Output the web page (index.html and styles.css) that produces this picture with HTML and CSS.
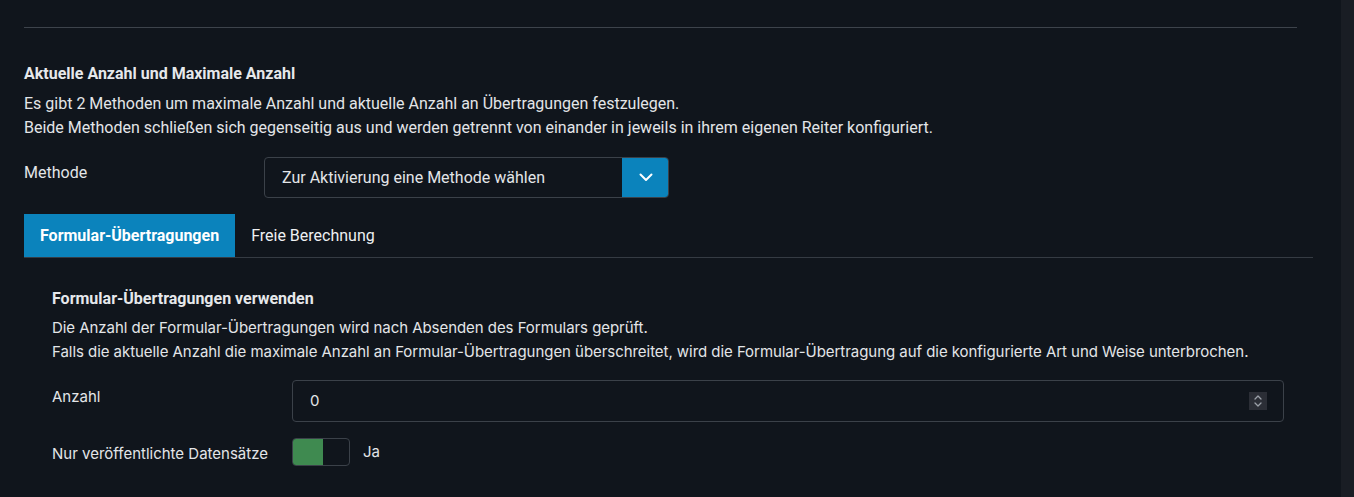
FILE: index.html
```html
<!DOCTYPE html>
<html lang="de">
<head>
<meta charset="utf-8">
<title>Anzahl</title>
<link rel="stylesheet" href="styles.css">
</head>
<body>
<div class="page">
  <main class="main">
    <hr class="sep">
    <section class="block">
      <h3 class="heading">Aktuelle Anzahl und Maximale Anzahl</h3>
      <p class="desc">Es gibt 2 Methoden um maximale Anzahl und aktuelle Anzahl an Übertragungen festzulegen.<br>Beide Methoden schließen sich gegenseitig aus und werden getrennt von einander in jeweils in ihrem eigenen Reiter konfiguriert.</p>
      <div class="row row-select">
        <label class="label">Methode</label>
        <div class="select">
          <span class="select-text">Zur Aktivierung eine Methode wählen</span>
          <span class="select-btn">
            <svg width="14" height="9" viewBox="0 0 14 9"><path d="M1.5 1.5 L7 7 L12.5 1.5" fill="none" stroke="#ffffff" stroke-width="2" stroke-linecap="round" stroke-linejoin="round"/></svg>
          </span>
        </div>
      </div>
      <div class="tabs">
        <div class="tab active">Formular-Übertragungen</div>
        <div class="tab">Freie Berechnung</div>
      </div>
      <div class="pane">
        <h3 class="heading">Formular-Übertragungen verwenden</h3>
        <p class="desc">Die Anzahl der Formular-Übertragungen wird nach Absenden des Formulars geprüft.<br>Falls die aktuelle Anzahl die maximale Anzahl an Formular-Übertragungen überschreitet, wird die Formular-Übertragung auf die konfigurierte Art und Weise unterbrochen.</p>
        <div class="row row-input">
          <label class="label">Anzahl</label>
          <div class="input">
            <span class="input-val">0</span>
            <span class="spin">
              <svg width="10" height="14" viewBox="0 0 10 14"><path d="M2 5 L5 2 L8 5 M2 9 L5 12 L8 9" fill="none" stroke="#9ba0a8" stroke-width="1.3" stroke-linecap="round" stroke-linejoin="round"/></svg>
            </span>
          </div>
        </div>
        <div class="row row-toggle">
          <label class="label label-toggle">Nur veröffentlichte Datensätze</label>
          <div class="toggle-wrap">
            <span class="toggle"><span class="toggle-on"></span><span class="toggle-off"></span></span>
            <span class="toggle-text">Ja</span>
          </div>
        </div>
      </div>
    </section>
  </main>
  <aside class="scrollbar"></aside>
</div>
</body>
</html>
```

FILE: styles.css
```css
html, body {
  margin: 0;
  padding: 0;
  height: 100%;
}
body {
  background: #10151c;
  color: #e3e5e8;
  font-family: Roboto, "Noto Sans", "Liberation Sans", sans-serif;
  font-size: 16px;
  line-height: 24px;
  overflow: hidden;
}
.page {
  display: grid;
  grid-template-columns: 1fr 13px;
  height: 497px;
}
.main {
  padding: 27px 28px 0 24px;
}
.scrollbar {
  background: #191d24;
}
.sep {
  margin: 0 16px 0 0;
  border: 0;
  border-top: 1px solid #3d434b;
  height: 0;
}
.block {
  padding-top: 34px;
}
.heading {
  margin: 0;
  font-size: 16px;
  font-weight: 700;
  line-height: 24px;
  color: #e6e8eb;
}
.desc {
  margin: 6px 0 0;
  line-height: 24px;
}
.row {
  display: grid;
  grid-template-columns: 240px auto;
  align-items: start;
}
.label {
  padding-top: 4px;
  line-height: 24px;
}
.row-select {
  margin-top: 17px;
}
.select {
  width: 405px;
  height: 41px;
  box-sizing: border-box;
  border: 1px solid #3b4149;
  border-radius: 4px;
  display: flex;
  align-items: stretch;
  overflow: hidden;
}
.select-text {
  flex: 1;
  padding-left: 17px;
  display: flex;
  align-items: center;
}
.select-btn {
  width: 47px;
  background: #0b83bc;
  display: flex;
  align-items: center;
  justify-content: center;
  margin: -1px -1px -1px 0;
}
.tabs {
  margin-top: 16px;
  display: flex;
  border-bottom: 1px solid #353b43;
}
.tab {
  height: 43px;
  padding: 0 16px;
  display: flex;
  align-items: center;
  color: #eef0f2;
}
.tab.active {
  background: #0b83bc;
  color: #ffffff;
  font-weight: 700;
}
.pane {
  padding: 29px 29px 0 28px;
  font-family: Inter, Roboto, "Noto Sans", sans-serif;
  font-size: 15px;
}
.pane .heading {
  font-family: Roboto, "Noto Sans", sans-serif;
}
.pane .desc {
  margin-top: 5px;
  letter-spacing: -0.05px;
}
.row-input {
  margin-top: 16px;
}
.row-input .label {
  padding-top: 5px;
}
.input {
  height: 42px;
  box-sizing: border-box;
  border: 1px solid #3b4149;
  border-radius: 4px;
  display: flex;
  align-items: center;
  padding: 0 16px 0 17px;
}
.input-val {
  flex: 1;
}
.spin {
  width: 18px;
  height: 18px;
  background: #2b2e36;
  display: flex;
  align-items: center;
  justify-content: center;
}
.row-toggle {
  margin-top: 16px;
}
.label-toggle {
  padding-top: 4px;
}
.toggle-wrap {
  display: flex;
  align-items: center;
  gap: 13px;
}
.toggle {
  width: 58px;
  height: 28px;
  box-sizing: border-box;
  border: 1px solid #3b4149;
  border-radius: 4px;
  display: flex;
  overflow: hidden;
}
.toggle-on {
  width: 31px;
  background: #3f8a50;
  margin: -1px 0 -1px -1px;
}
.toggle-off {
  flex: 1;
}
.toggle-text {
  line-height: 24px;
}
```
